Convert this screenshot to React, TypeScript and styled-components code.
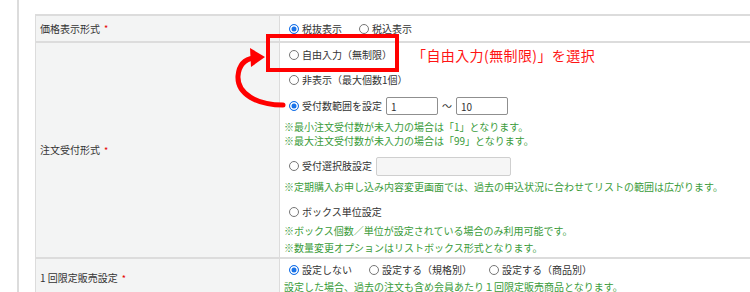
import React from "react";
import styled, { createGlobalStyle } from "styled-components";

const Global = createGlobalStyle`
  html, body { margin: 0; padding: 0; background: #fff; overflow: hidden; }
  body {
    font-family: "Noto Sans CJK JP", "Noto Sans", sans-serif;
    font-size: 10px;
    color: #333;
  }
`;

const Page = styled.div`
  position: relative;
  width: 750px;
  height: 292px;
  overflow: hidden;
  padding-left: 17px;
  box-sizing: border-box;
`;

const Frame = styled.div`
  border-left: 2px solid #dcdcdc;
  height: 100%;
  padding: 14px 0 0 16px;
  box-sizing: border-box;
`;

const Table = styled.div`
  width: 760px;
  border-top: 2px solid #dcdcdc;
  border-left: 1px solid #dcdcdc;
`;

const Row = styled.div`
  display: grid;
  grid-template-columns: 244px 1fr;
  border-bottom: 2px solid #dcdcdc;
`;

const LabelCell = styled.div`
  background: #f3f4f4;
  border-right: 1px solid #dcdcdc;
  display: flex;
  align-items: center;
  padding-left: 4px;
  line-height: 1;
`;

const Req = styled.span`
  color: #e60000;
  margin-left: 4px;
  font-size: 9px;
`;

const ValueCell = styled.div<{ $h?: number; $pb?: number }>`
  display: flex;
  flex-direction: column;
  padding: 0 0 ${(p) => p.$pb ?? 0}px 4px;
  ${(p) => (p.$h ? `height: ${p.$h}px; justify-content: center;` : "")}
`;

const Line = styled.div<{ $mt?: number }>`
  display: flex;
  align-items: center;
  height: 20px;
  margin-top: ${(p) => p.$mt ?? 0}px;
  line-height: 1;
  white-space: nowrap;
`;

const Radio = styled.input.attrs({ type: "radio" })`
  appearance: none;
  -webkit-appearance: none;
  width: 10px;
  height: 10px;
  margin: 0 3px 0 5px;
  border-radius: 50%;
  border: 1px solid #767676;
  background: #fff;
  box-sizing: border-box;
  flex: none;
  &:checked {
    border-color: #1a73e8;
    background: #1a73e8;
    box-shadow: inset 0 0 0 1.5px #fff;
  }
`;

const OptText = styled.span<{ $gap?: number }>`
  margin-right: ${(p) => p.$gap ?? 0}px;
`;

const TextBox = styled.input<{ $w: number; $h: number; $off?: boolean }>`
  width: ${(p) => p.$w}px;
  height: ${(p) => p.$h}px;
  box-sizing: border-box;
  margin: 0 0 0 4px;
  padding: 0 4px;
  border: 1px solid ${(p) => (p.$off ? "#cfcfcf" : "#8f8f8f")};
  border-radius: 2px;
  background: ${(p) => (p.$off ? "#f6f6f6" : "#fff")};
  font-family: "Noto Sans CJK JP", "Noto Sans", sans-serif;
  font-size: 10px;
  color: #333;
  outline: none;
`;

const Tilde = styled.span`
  margin: 0 0 0 4px;
`;

const Notes = styled.div<{ $lh: number; $mt?: number }>`
  color: #3a9b3a;
  line-height: ${(p) => p.$lh}px;
  margin-top: ${(p) => p.$mt ?? 0}px;
  white-space: nowrap;
`;

const Highlight = styled.div`
  position: absolute;
  left: 266px;
  top: 34px;
  width: 133px;
  height: 38px;
  border: 4px solid #ff0000;
  box-sizing: border-box;
  pointer-events: none;
`;

const Callout = styled.div`
  position: absolute;
  left: 412px;
  top: 46px;
  font-size: 14px;
  line-height: 18px;
  letter-spacing: 0.4px;
  color: #ff1414;
  white-space: nowrap;
`;

const ArrowSvg = styled.svg`
  position: absolute;
  left: 0;
  top: 0;
  pointer-events: none;
`;

export default function App() {
  return (
    <>
      <Global />
      <Page>
        <Frame>
          <Table>
            <Row>
              <LabelCell>
                価格表示形式<Req>*</Req>
              </LabelCell>
              <ValueCell $h={25}>
                <Line>
                  <Radio name="price" defaultChecked />
                  <OptText $gap={12}>税抜表示</OptText>
                  <Radio name="price" />
                  <OptText>税込表示</OptText>
                </Line>
              </ValueCell>
            </Row>
            <Row>
              <LabelCell>
                注文受付形式<Req>*</Req>
              </LabelCell>
              <ValueCell $pb={1}>
                <Line $mt={2}>
                  <Radio name="order" />
                  <OptText>自由入力（無制限）</OptText>
                </Line>
                <Line $mt={5}>
                  <Radio name="order" />
                  <OptText>非表示（最大個数1個）</OptText>
                </Line>
                <Line $mt={6}>
                  <Radio name="order" defaultChecked />
                  <OptText>受付数範囲を設定</OptText>
                  <TextBox $w={52} $h={18} defaultValue="1" />
                  <Tilde>～</Tilde>
                  <TextBox $w={52} $h={18} defaultValue="10" />
                </Line>
                <Notes $lh={14} $mt={4}>
                  ※最小注文受付数が未入力の場合は「1」となります。
                  <br />
                  ※最大注文受付数が未入力の場合は「99」となります。
                </Notes>
                <Line $mt={8}>
                  <Radio name="order" />
                  <OptText>受付選択肢設定</OptText>
                  <TextBox $w={135} $h={19} $off disabled />
                </Line>
                <Notes $lh={14} $mt={4}>
                  ※定期購入お申し込み内容変更画面では、過去の申込状況に合わせてリストの範囲は広がります。
                </Notes>
                <Line $mt={8}>
                  <Radio name="order" />
                  <OptText>ボックス単位設定</OptText>
                </Line>
                <Notes $lh={17}>
                  ※ボックス個数／単位が設定されている場合のみ利用可能です。
                  <br />
                  ※数量変更オプションはリストボックス形式となります。
                </Notes>
              </ValueCell>
            </Row>
            <Row>
              <LabelCell>
                1 回限定販売設定<Req>*</Req>
              </LabelCell>
              <ValueCell $pb={3}>
                <Line $mt={1}>
                  <Radio name="once" defaultChecked />
                  <OptText $gap={12}>設定しない</OptText>
                  <Radio name="once" />
                  <OptText $gap={12}>設定する（規格別）</OptText>
                  <Radio name="once" />
                  <OptText>設定する（商品別）</OptText>
                </Line>
                <Notes $lh={14}>
                  設定した場合、過去の注文も含め会員あたり１回限定販売商品となります。
                </Notes>
              </ValueCell>
            </Row>
          </Table>
        </Frame>
        <Highlight />
        <Callout>「自由入力(無制限)」を選択</Callout>
        <ArrowSvg width="750" height="292" viewBox="0 0 750 292">
          <path
            d="M283 105 C 257 105, 237 94, 238 76 C 239 64, 246 59, 254 58"
            fill="none"
            stroke="#ff0000"
            strokeWidth="5"
            strokeLinecap="round"
          />
          <polygon points="265,57 250,48 251,67" fill="#ff0000" />
        </ArrowSvg>
      </Page>
    </>
  );
}
